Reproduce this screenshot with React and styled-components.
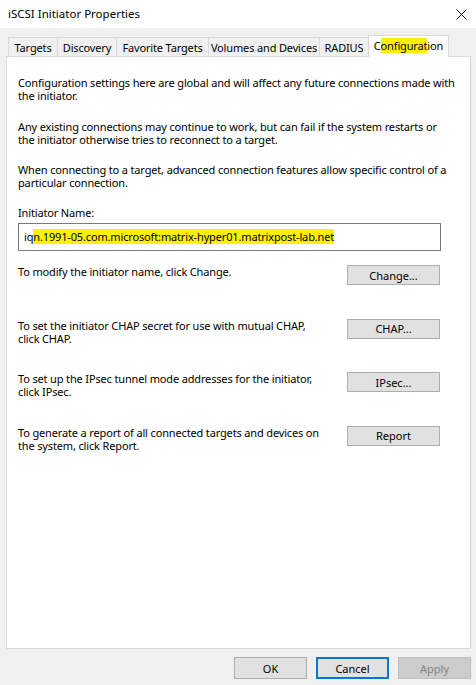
import React from "react";
import styled, { createGlobalStyle } from "styled-components";

const GlobalStyle = createGlobalStyle`
  html, body {
    margin: 0;
    padding: 0;
    background: #f0f0f0;
  }
  body {
    font-family: "Noto Sans", "Open Sans", sans-serif;
    font-size: 11px;
    letter-spacing: -0.15px;
    color: #000;
  }
`;

const Window = styled.div`
  width: 476px;
  height: 685px;
  background: #f0f0f0;
  display: flex;
  flex-direction: column;
  overflow: hidden;
`;

const TitleBar = styled.div`
  height: 28px;
  background: #fff;
  display: flex;
  align-items: center;
  justify-content: space-between;
  padding: 0 9px 0 8px;
  flex-shrink: 0;
`;

const Title = styled.div`
  font-size: 11.5px;
  letter-spacing: 0;
  margin-top: -2px;
`;

const Body = styled.div`
  padding: 7px 5px 0 6px;
  display: flex;
  flex-direction: column;
`;

const TabStrip = styled.div`
  display: flex;
  align-items: flex-end;
  height: 21px;
  padding-left: 2px;
  position: relative;
  z-index: 1;
`;

const Tab = styled.div`
  box-sizing: border-box;
  width: ${(p) => p.w}px;
  height: ${(p) => (p.active ? 22 : 19)}px;
  margin-bottom: ${(p) => (p.active ? -1 : 0)}px;
  margin-left: -1px;
  border: 1px solid #d9d9d9;
  border-bottom: none;
  background: ${(p) => (p.active ? "#fff" : "#f0f0f0")};
  display: flex;
  align-items: center;
  justify-content: center;
  white-space: nowrap;
  padding-bottom: ${(p) => (p.active ? 3 : 0)}px;
  &:first-child {
    margin-left: 0;
  }
`;

const Mark = styled.span`
  background: #ffef00;
`;

const Panel = styled.div`
  box-sizing: border-box;
  height: 593px;
  border: 1px solid #d9d9d9;
  background: #fff;
  padding: 19px 30px 0 11px;
  line-height: 13px;
  white-space: nowrap;
`;

const Para = styled.p`
  margin: 0 0 ${(p) => p.gap || 18}px 0;
`;

const Label = styled.div`
  margin-bottom: 4px;
`;

const NameBox = styled.div`
  box-sizing: border-box;
  height: 28px;
  border: 1px solid #7a7a7a;
  display: flex;
  align-items: center;
  padding: 0 0 2px 5px;
  margin-right: -1px;
`;

const RowList = styled.div`
  margin-top: 14px;
`;

const Row = styled.div`
  height: 53.5px;
  display: flex;
  justify-content: space-between;
  align-items: flex-start;
`;

const Button = styled.button`
  box-sizing: border-box;
  width: ${(p) => p.w || 93}px;
  height: ${(p) => p.h || 20}px;
  font: inherit;
  font-size: 11px;
  color: ${(p) => (p.disabled ? "#838383" : "#000")};
  background: ${(p) => (p.disabled ? "#cccccc" : "#e1e1e1")};
  border: ${(p) =>
    p.focused ? "2px solid #0078d7" : p.disabled ? "1px solid #bfbfbf" : "1px solid #adadad"};
  padding: 0;
  margin: 0;
  flex-shrink: 0;
`;

const Footer = styled.div`
  display: flex;
  justify-content: flex-end;
  gap: 9px;
  padding-top: 8px;
`;

const CloseIcon = () => (
  <svg width="11" height="11" viewBox="0 0 11 11">
    <path d="M0.5 0.5 L10.5 10.5 M10.5 0.5 L0.5 10.5" stroke="#000" strokeWidth="1" />
  </svg>
);

const tabs = [
  ["Targets", 50],
  ["Discovery", 60],
  ["Favorite Targets", 93],
  ["Volumes and Devices", 112],
  ["RADIUS", 50],
];

const rows = [
  [["To modify the initiator name, click Change."], "Change..."],
  [["To set the initiator CHAP secret for use with mutual CHAP,", "click CHAP."], "CHAP..."],
  [["To set up the IPsec tunnel mode addresses for the initiator,", "click IPsec."], "IPsec..."],
  [["To generate a report of all connected targets and devices on", "the system, click Report."], "Report"],
];

const Lines = ({ lines }) => (
  <div>
    {lines.map((l, i) => (
      <div key={i}>{l}</div>
    ))}
  </div>
);

export default function App() {
  return (
    <>
      <GlobalStyle />
      <Window>
        <TitleBar>
          <Title>iSCSI Initiator Properties</Title>
          <CloseIcon />
        </TitleBar>
        <Body>
          <TabStrip>
            {tabs.map(([t, w]) => (
              <Tab key={t} w={w}>
                {t}
              </Tab>
            ))}
            <Tab w={81} active>
              <span>
                C<Mark>onfigurat</Mark>ion
              </span>
            </Tab>
          </TabStrip>
          <Panel>
            <Para>
              Configuration settings here are global and will affect any future connections made with
              <br />
              the initiator.
            </Para>
            <Para gap={17}>
              Any existing connections may continue to work, but can fail if the system restarts or
              <br />
              the initiator otherwise tries to reconnect to a target.
            </Para>
            <Para gap={17}>
              When connecting to a target, advanced connection features allow specific control of a
              <br />
              particular connection.
            </Para>
            <Label>Initiator Name:</Label>
            <NameBox>
              <span>
                iq<Mark>n.1991-05.com.microsoft:matrix-hyper01.matrixpost-lab.net</Mark>
              </span>
            </NameBox>
            <RowList>
              {rows.map(([lines, label]) => (
                <Row key={label}>
                  <Lines lines={lines} />
                  <Button>{label}</Button>
                </Row>
              ))}
            </RowList>
          </Panel>
          <Footer>
            <Button w={73} h={22}>OK</Button>
            <Button w={73} h={22} focused>
              Cancel
            </Button>
            <Button w={73} h={22} disabled>
              Apply
            </Button>
          </Footer>
        </Body>
      </Window>
    </>
  );
}
